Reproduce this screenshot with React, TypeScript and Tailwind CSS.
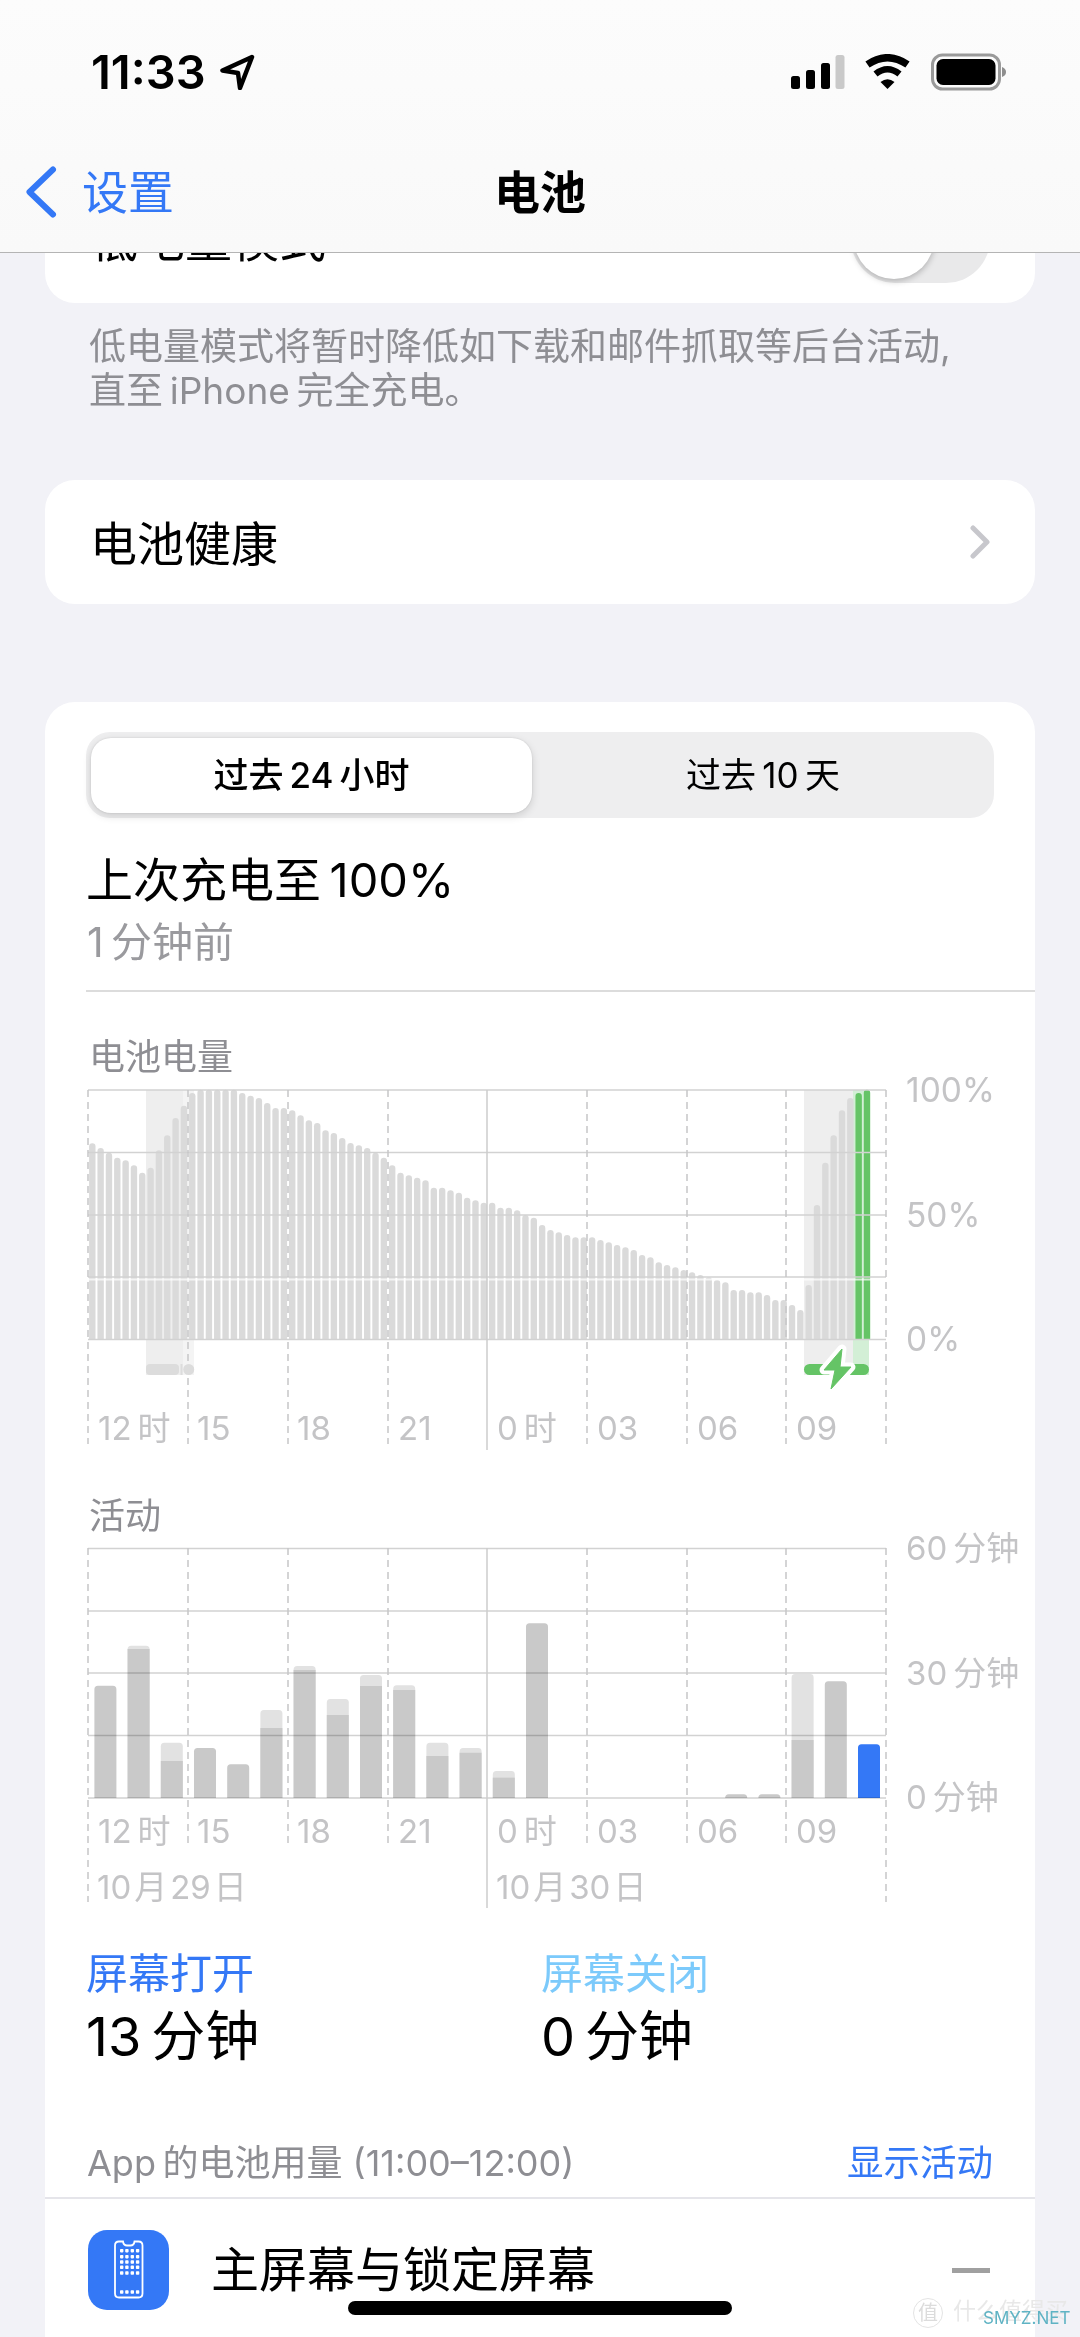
const batteryTops = [
  430, 444, 458, 473, 481, 496, 518, 503, 451, 406, 354, 317, 279, 269, 269, 269, 269, 269, 279, 287, 294, 309, 324, 324,
  331, 346, 361, 369, 391, 399, 414, 429, 436, 444, 458, 473, 496, 518, 526, 533, 541, 563, 563, 571, 578, 593, 601, 608,
  608, 623, 623, 631, 645, 653, 675, 690, 697, 705, 712, 712, 712, 720, 727, 735, 742, 750, 765, 772, 787, 795, 802, 810,
  817, 825, 832, 840, 847, 870, 870, 877, 877, 885, 900, 900, 915, 930, 855, 615, 488, 406, 331, 294, 279, 269,
]

// [slot, light top, dark top], tops as read off the reference
const activityBars: [number, number | null, number][] = [
  [0, null, 617], [1, 497, 507], [2, 788, 843], [3, null, 804], [4, null, 853], [5, 690, 744], [6, 558, 570],
  [7, 657, 705], [8, 585, 618], [9, 616, 630], [10, 788, 828], [11, 804, 818], [12, 873, 893], [13, null, 430],
  [19, null, 943], [20, null, 943], [21, 582, 780], [22, null, 604],
]

const hourLines = [88, 188, 288, 388, 587, 687, 786, 886]
const hourLabels: [number, string][] = [
  [98, '12\u2009时'], [197, '15'], [297, '18'], [398, '21'], [497, '0\u2009时'], [597, '03'], [697, '06'], [796, '09'],
]

function topRounded(x: number, w: number, top: number, bottom: number, r: number) {
  return `M${x} ${bottom}V${top + r}A${r} ${r} 0 0 1 ${x + r} ${top}H${x + w - r}A${r} ${r} 0 0 1 ${x + w} ${top + r}V${bottom}Z`
}

function StatusBar() {
  return (
    <div className="mt-[53px] flex h-[37px] items-center justify-between pl-[91px] pr-[73px]">
      <div className="flex items-center gap-[14px]">
        <span className="text-[47px] font-semibold leading-none text-black">11:33</span>
        <svg viewBox="222 54 36 36" className="h-[36px] w-[36px]">
          <path d="M254 57L224.500 70.500L240 73L242 88Z" fill="none" stroke="#000" strokeWidth="4.500" strokeLinejoin="round" />
        </svg>
      </div>
      <div className="flex items-center gap-[19px]">
        <svg viewBox="790 53 54 36" className="h-[36px] w-[54px]">
          <rect x="790" y="75" width="9" height="13" rx="2.500" />
          <rect x="805" y="69" width="9" height="19" rx="2.500" />
          <rect x="820" y="62" width="9" height="26" rx="2.500" />
          <rect x="834.500" y="54" width="9" height="34" rx="2.500" fill="#c9c9c9" />
        </svg>
        <svg viewBox="863 53 49 36" className="-ml-[1px] h-[36px] w-[49px]">
          <path d="M867.500 63.500Q887.500 50 907.500 63.500" fill="none" stroke="#000" strokeWidth="7.500" />
          <path d="M875.500 73Q887.500 63.500 899.500 73" fill="none" stroke="#000" strokeWidth="6.500" />
          <path d="M880.500 81Q887.500 75.500 894.500 81L887.500 88Z" />
        </svg>
        <svg viewBox="932 52 76 38" className="h-[38px] w-[76px]">
          <rect x="933.500" y="54" width="67" height="34" rx="10" fill="none" stroke="#9a9a9a" strokeWidth="3" />
          <rect x="937.500" y="58" width="59" height="26" rx="6.500" />
          <path d="M1003 66C1006 67 1007 69 1007 71C1007 73 1006 75 1003 76Z" fill="#8e8e8e" />
        </svg>
      </div>
    </div>
  )
}

function NavBar() {
  return (
    <div className="mt-[72px] grid h-[60px] grid-cols-[1fr_auto_1fr] items-center px-[25px]">
      <div className="flex items-center gap-[24px]">
        <svg viewBox="25 164 33 54" className="h-[54px] w-[33px]">
          <path d="M53 168.500L29.500 191L53 213.500" fill="none" stroke="#3478f6" strokeWidth="6" strokeLinecap="round" strokeLinejoin="round" />
        </svg>
        <span className="text-[46px] leading-none text-[#3478f6]">设置</span>
      </div>
      <span className="text-[46px] font-semibold leading-none text-black">电池</span>
      <div />
    </div>
  )
}

function BatteryChart() {
  return (
    <svg viewBox="45 1079 990 381" className="h-[381px] w-[990px] overflow-visible">
      <rect x="146" y="1090" width="37" height="285" fill="#eeeeee" />
      <rect x="183" y="1090" width="11" height="285" fill="#f4f4f4" />
      <rect x="804" y="1090" width="65" height="285" fill="#eeeeee" />
      <rect x="853" y="1090" width="16" height="285" fill="#d3efd6" />
      {batteryTops.map((t, i) => (
        <path
          key={i}
          d={topRounded(89.1 + 8.33 * i, 6.4, 1000 + t / 3, 1339.5, 3.2)}
          fill={i >= 92 ? '#65c466' : '#dadada'}
        />
      ))}
      <rect x="88" y="1278.500" width="798" height="2" fill="#fff" opacity="0.7" />
      {[1090, 1152.500, 1215, 1277, 1339.500].map((y) => (
        <line key={y} x1="88" x2="886" y1={y} y2={y} stroke="#d2d2d2" strokeWidth="1.500" />
      ))}
      {hourLines.map((x) => (
        <line key={x} x1={x} x2={x} y1="1090" y2="1444" stroke="#c6c6c8" strokeWidth="1.500" strokeDasharray="7 5" />
      ))}
      <line x1="487" x2="487" y1="1090" y2="1450" stroke="#cccccc" strokeWidth="1.500" />

      <rect x="146" y="1364" width="33" height="11" rx="4" fill="#dcdcdc" />
      <rect x="180.500" y="1364" width="2" height="11" fill="#dcdcdc" />
      <circle cx="188.700" cy="1369.500" r="5.500" fill="#dcdcdc" />
      <rect x="804" y="1364" width="65" height="11" rx="5.500" fill="#65c466" />
      <path d="M842 1349L824 1370H835L831 1389L851 1367H840Z" fill="#fff" stroke="#fff" strokeWidth="9" strokeLinejoin="round" />
      <path d="M842 1349L824 1370H835L831 1389L851 1367H840Z" fill="#65c466" stroke="#65c466" strokeWidth="1" strokeLinejoin="round" />

      {hourLabels.map(([x, label]) => (
        <text key={label} x={x} y="1440" fontSize="33" fill="#c4c4c6">{label}</text>
      ))}
      <text x="906" y="1102" fontSize="33.500" fill="#c4c4c6">100%</text>
      <text x="906" y="1227" fontSize="33.500" fill="#c4c4c6">50%</text>
      <text x="906" y="1351" fontSize="33.500" fill="#c4c4c6">0%</text>
    </svg>
  )
}

function ActivityChart() {
  return (
    <svg viewBox="45 1537 990 373" className="h-[373px] w-[990px] overflow-visible">
      {activityBars.map(([slot, light, dark]) => {
        const x = 94.4 + 33.2 * slot
        return (
          <g key={slot}>
            {light !== null && <path d={topRounded(x, 22, 1480 + light / 3, 1798, 3.500)} fill="#e2e2e2" />}
            <path
              d={light !== null ? `M${x} 1798V${1480 + dark / 3}H${x + 22}V1798Z` : topRounded(x, 22, 1480 + dark / 3, 1798, 3.500)}
              fill="#c9c9c9"
            />
          </g>
        )
      })}
      <path d={topRounded(858, 22, 1744.300, 1798, 3.500)} fill="#3478f6" />
      {[1548.500, 1611, 1673, 1735.500, 1798].map((y) => (
        <line key={y} x1="88" x2="886" y1={y} y2={y} stroke="#d2d2d2" strokeWidth="1.500" className="mix-blend-multiply" />
      ))}
      {hourLines.map((x) => (
        <line
          key={x}
          x1={x}
          x2={x}
          y1="1548"
          y2={x === 88 || x === 886 ? 1902 : 1847}
          stroke="#c6c6c8"
          strokeWidth="1.500"
          strokeDasharray="7 5"
        />
      ))}
      <line x1="487" x2="487" y1="1548" y2="1908" stroke="#cccccc" strokeWidth="1.500" />

      {hourLabels.map(([x, label]) => (
        <text key={label} x={x} y="1843" fontSize="33" fill="#c4c4c6">{label}</text>
      ))}
      <text x="97" y="1899" fontSize="33" fill="#c4c4c6">10&#8202;月&#8202;29&#8202;日</text>
      <text x="496" y="1899" fontSize="33" fill="#c4c4c6">10&#8202;月&#8202;30&#8202;日</text>
      <text x="906" y="1560" fontSize="33" fill="#c4c4c6">60&thinsp;分钟</text>
      <text x="906" y="1685" fontSize="33" fill="#c4c4c6">30&thinsp;分钟</text>
      <text x="906" y="1809" fontSize="33" fill="#c4c4c6">0&thinsp;分钟</text>
    </svg>
  )
}

function HomeScreenIcon() {
  const columns = [121.7, 126.9, 132.3, 137.6]
  const rows = [2250.7, 2256.7, 2262, 2267.3, 2273, 2292]
  return (
    <div className="flex h-[80px] w-[81px] items-center justify-center rounded-[19px] bg-[#3478f6]">
      <svg viewBox="113 2240 31 60" className="h-[60px] w-[31px]">
        <path
          d="M119 2241.500H123C123.500 2245 125 2245.500 127 2245.500H130.500C132.500 2245.500 134 2245 134.500 2241.500H138.500C141 2241.500 142.500 2243 142.500 2245.500V2293.500C142.500 2296 141 2297.500 138.500 2297.500H119C116.500 2297.500 115 2296 115 2293.500V2245.500C115 2243 116.500 2241.500 119 2241.500Z"
          fill="none"
          stroke="#fff"
          strokeWidth="1.800"
        />
        {rows.map((y) =>
          columns.map((x) => <rect key={`${x}-${y}`} x={x - 1.7} y={y - 1.7} width="3.400" height="3.400" rx="0.800" fill="#fff" />),
        )}
      </svg>
    </div>
  )
}

export default function App() {
  return (
    <div className="relative flex h-[2337px] w-[1080px] flex-col overflow-hidden bg-[#f2f2f7] font-['Inter','Noto_Sans_CJK_SC',sans-serif]">
      <header className="h-[253px] shrink-0 border-b border-[#b4b4b4] bg-gradient-to-b from-[#fcfcfc] to-[#f9f9f9]">
        <StatusBar />
        <NavBar />
      </header>

      {/* scrolled under the nav bar, only the bottom of the row shows */}
      <section className="mx-[45px] h-[50px] shrink-0 overflow-hidden rounded-b-[30px] bg-white">
        <div className="-mt-[78px] flex h-[128px] items-center justify-between pl-[46px] pr-[45px]">
          <span className="text-[47px] leading-none text-black">低电量模式</span>
          <div className="flex h-[88px] w-[139px] items-center rounded-full bg-[#e9e9ea] pl-[3px]">
            <div className="h-[80px] w-[80px] rounded-full bg-white shadow-[0_2px_6px_rgba(0,0,0,0.25)]" />
          </div>
        </div>
      </section>
      <p className="mx-[89px] mt-[22px] text-[37px] leading-[44px] text-[#8e8e93]">
        低电量模式将暂时降低如下载和邮件抓取等后台活动,
        <br />
        直至&thinsp;iPhone&thinsp;完全充电。
      </p>

      <section className="mx-[45px] mt-[67px] flex h-[124px] shrink-0 items-center justify-between rounded-[30px] bg-white pl-[45px] pr-[45px]">
        <span className="pt-[3px] text-[47px] leading-none text-black">电池健康</span>
        <svg viewBox="0 0 20 34" className="h-[34px] w-[20px]">
          <path d="M3 3L17 17L3 31" fill="none" stroke="#c7c7cc" strokeWidth="5" strokeLinecap="round" strokeLinejoin="round" />
        </svg>
      </section>

      <section className="mx-[45px] mt-[98px] flex flex-1 flex-col rounded-t-[30px] bg-white">
        <div className="mx-[41px] mt-[30px] flex h-[86px] items-center rounded-[24px] bg-[#eeeeef] pl-[5px]">
          <div className="flex h-[75px] w-[441px] items-center justify-center rounded-[20px] bg-white text-[35px] font-medium text-black shadow-[0_3px_8px_rgba(0,0,0,0.14),0_0_2px_rgba(0,0,0,0.12)]">
            过去&thinsp;24&thinsp;小时
          </div>
          <div className="flex flex-1 items-center justify-center text-[35px] text-black">过去&thinsp;10&thinsp;天</div>
        </div>

        <div className="ml-[41px] mt-[32px] text-[47px] leading-[60px] text-black">上次充电至&thinsp;100%</div>
        <div className="ml-[42px] mt-[7px] text-[41px] leading-[50px] text-[#9a9a9e]">1&thinsp;分钟前</div>
        <div className="ml-[41px] mt-[23px] h-[2px] bg-[#dcdcdc]" />

        <div className="ml-[44px] mt-[43px] text-[36px] leading-[44px] text-[#8e8e93]">电池电量</div>
        <BatteryChart />

        <div className="ml-[44px] mt-[35px] text-[36px] leading-[42px] text-[#8e8e93]">活动</div>
        <ActivityChart />

        <div className="ml-[41px] mt-[39px] grid grid-cols-[455px_1fr]">
          <div>
            <div className="text-[42px] leading-[50px] text-[#3478f6]">屏幕打开</div>
            <div className="mt-[5px] text-[54px] leading-[66px] text-black">13&thinsp;分钟</div>
          </div>
          <div>
            <div className="text-[42px] leading-[50px] text-[#7ccafb]">屏幕关闭</div>
            <div className="mt-[5px] text-[54px] leading-[66px] text-black">0&thinsp;分钟</div>
          </div>
        </div>

        <div className="ml-[42px] mr-[42px] mt-[70px] flex h-[46px] items-center justify-between text-[36px]">
          <span className="text-[#8e8e93]">App&thinsp;的电池用量 (11:00–12:00)</span>
          <span className="text-[36.500px] text-[#3478f6]">显示活动</span>
        </div>
        <div className="mt-[11px] h-[2px] bg-[#e5e5ea]" />

        <div className="ml-[43px] mr-[45px] mt-[31px] flex items-center">
          <HomeScreenIcon />
          <span className="ml-[42px] text-[48px] leading-none text-black">主屏幕与锁定屏幕</span>
          <div className="ml-auto h-[5px] w-[38px] bg-[#a0a0a0]" />
        </div>
      </section>

      <div className="absolute left-[348px] top-[2301px] h-[14px] w-[384px] rounded-full bg-black" />

      <div className="absolute left-[913px] top-[2298px] flex h-[30px] w-[30px] items-center justify-center rounded-full border border-[#e4e4e4] text-[20px] leading-none text-[#dcdcdc]">
        值
      </div>
      <div className="absolute left-[953px] top-[2298px] text-[23px] leading-[26px] text-[#e8e8e8]">什么值得买</div>
      <div className="absolute left-[983px] top-[2309px] text-[17px] leading-[18px] text-[#5fb3c4]">SMYZ.NET</div>
    </div>
  )
}
